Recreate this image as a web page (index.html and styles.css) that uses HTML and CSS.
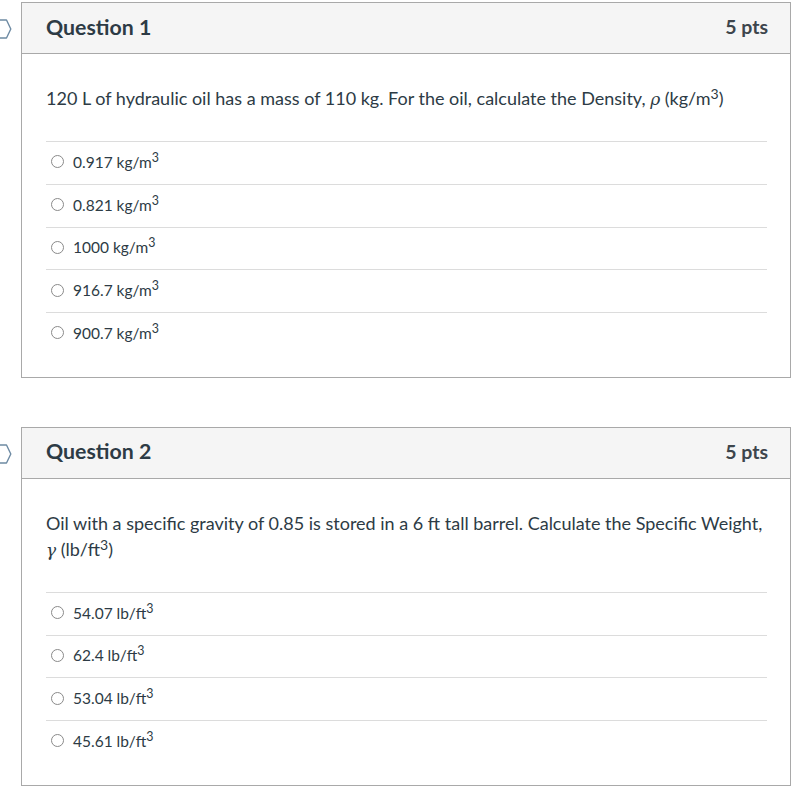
FILE: index.html
```html
<!DOCTYPE html>
<html lang="en">
<head>
<meta charset="utf-8">
<link rel="stylesheet" href="styles.css">
</head>
<body>
<div class="quiz">
  <div class="question">
    <svg class="flag" width="12" height="20" viewBox="0 0 12 20"><path d="M-4 1 H6.5 L10.8 10 L6.5 19 H-4" fill="none" stroke="#6d8aa3" stroke-width="1.4" stroke-linejoin="round"/></svg>
    <div class="q-header">
      <span class="q-title">Question 1</span>
      <span class="q-pts">5 pts</span>
    </div>
    <div class="q-body">
      <p class="q-text">120 L of hydraulic oil has a mass of 110 kg. For the oil, calculate the Density, <i class="sym">ρ</i> (kg/m<sup>3</sup>)</p>
      <ul class="answers">
        <li class="answer"><span class="radio"></span><span>0.917 kg/m<sup>3</sup></span></li>
        <li class="answer"><span class="radio"></span><span>0.821 kg/m<sup>3</sup></span></li>
        <li class="answer"><span class="radio"></span><span>1000 kg/m<sup>3</sup></span></li>
        <li class="answer"><span class="radio"></span><span>916.7 kg/m<sup>3</sup></span></li>
        <li class="answer"><span class="radio"></span><span>900.7 kg/m<sup>3</sup></span></li>
      </ul>
    </div>
  </div>
  <div class="question">
    <svg class="flag" width="12" height="20" viewBox="0 0 12 20"><path d="M-4 1 H6.5 L10.8 10 L6.5 19 H-4" fill="none" stroke="#6d8aa3" stroke-width="1.4" stroke-linejoin="round"/></svg>
    <div class="q-header">
      <span class="q-title">Question 2</span>
      <span class="q-pts">5 pts</span>
    </div>
    <div class="q-body">
      <p class="q-text">Oil with a specific gravity of 0.85 is stored in a 6 ft tall barrel. Calculate the Specific Weight, <i class="sym">γ</i> (lb/ft<sup>3</sup>)</p>
      <ul class="answers">
        <li class="answer"><span class="radio"></span><span>54.07 lb/ft<sup>3</sup></span></li>
        <li class="answer"><span class="radio"></span><span>62.4 lb/ft<sup>3</sup></span></li>
        <li class="answer"><span class="radio"></span><span>53.04 lb/ft<sup>3</sup></span></li>
        <li class="answer"><span class="radio"></span><span>45.61 lb/ft<sup>3</sup></span></li>
      </ul>
    </div>
  </div>
</div>
</body>
</html>
```

FILE: styles.css
```css
* { box-sizing: border-box; }
html, body {
  margin: 0;
  padding: 0;
  background: #fff;
}
body {
  font-family: Lato, "Noto Sans", sans-serif;
  color: #2d3b45;
}
.quiz {
  padding: 2px 1px 0 21px;
  display: flex;
  flex-direction: column;
  gap: 49px;
}
.question {
  position: relative;
  width: 770px;
  border: 1px solid #a9a9a9;
  background: #fff;
}
.flag {
  position: absolute;
  left: -22px;
  top: 16px;
}
.q-header {
  height: 51px;
  background: #f5f5f5;
  border-bottom: 1px solid #a9a9a9;
  display: flex;
  align-items: center;
  justify-content: space-between;
  padding: 0 22px 3px 24px;
}
.q-title {
  font-size: 21.3px;
  font-weight: 700;
  color: #2d3b45;
}
.q-pts {
  font-size: 19.5px;
  font-weight: 700;
  color: #3d454c;
}
.q-body {
  padding: 31px 23px 22px 24px;
}
.q-text {
  margin: 0 0 29px;
  font-size: 18px;
  line-height: 26px;
}
.sym {
  font-family: "DejaVu Serif", serif;
  font-style: italic;
  font-size: 17px;
}
sup {
  font-size: 0.78em;
  line-height: 0;
  vertical-align: 0.45em;
}
.answer sup {
  font-size: 0.8em;
}
.answers {
  list-style: none;
  margin: 0;
  padding: 0;
}
.answer {
  display: flex;
  align-items: center;
  height: 42.75px;
  border-top: 1px solid #dcdcdc;
  font-size: 15.5px;
  padding: 0 0 2px 5px;
  gap: 9px;
}
.radio {
  width: 13px;
  height: 13px;
  border: 1px solid #8a8a8a;
  border-radius: 50%;
  flex: none;
}
```
